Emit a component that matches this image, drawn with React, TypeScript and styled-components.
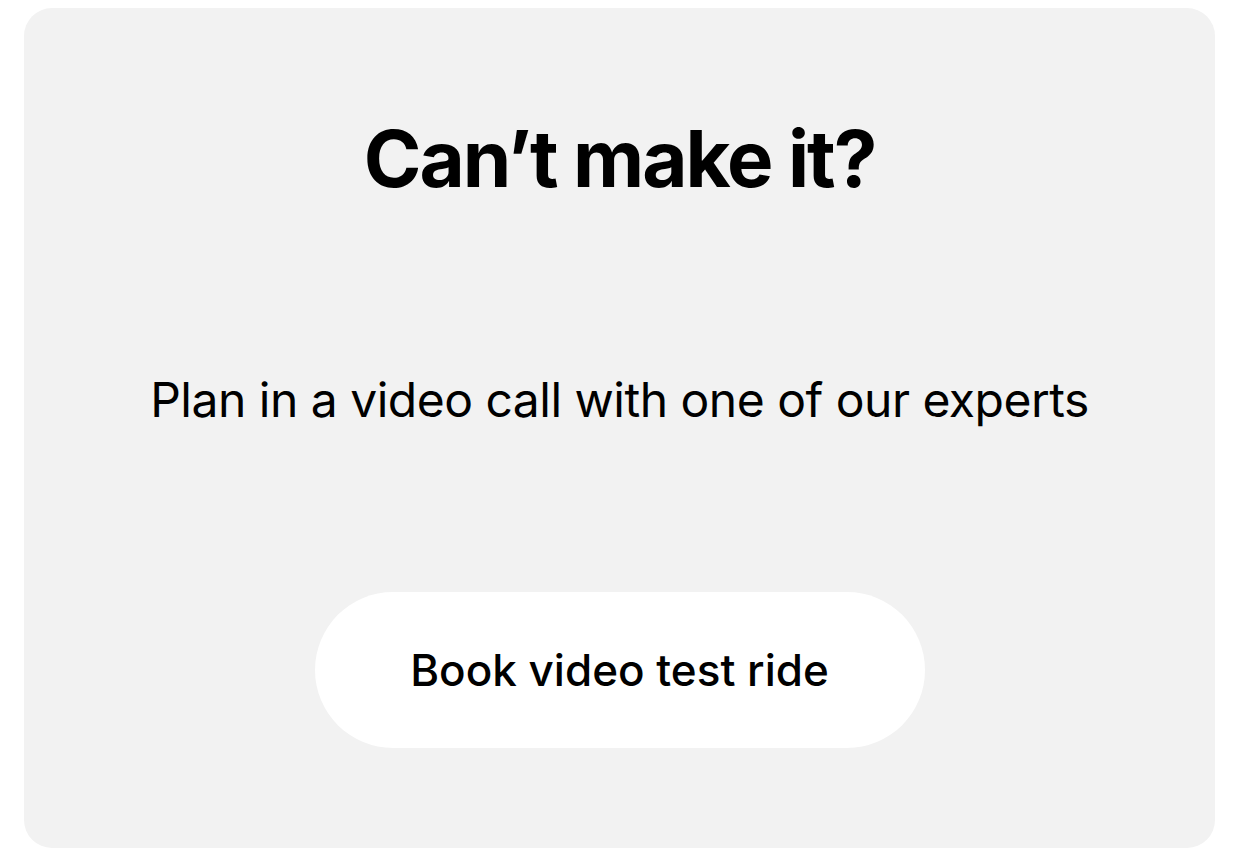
import React from "react";
import styled, { createGlobalStyle } from "styled-components";

const GlobalStyle = createGlobalStyle`
    html, body {
        margin: 0;
        padding: 0;
        background: #ffffff;
    }
    body {
        font-family: Inter, "Noto Sans", "Liberation Sans", sans-serif;
        color: #000000;
    }
`;

const Page = styled.div`
    width: 1239px;
    height: 856px;
    padding: 8px 24px;
    box-sizing: border-box;
`;

const Card = styled.section`
    height: 840px;
    box-sizing: border-box;
    background: #f2f2f2;
    border-radius: 28px;
    display: flex;
    flex-direction: column;
    align-items: center;
    padding-top: 104px;
`;

const Title = styled.h2`
    margin: 0;
    font-size: 78px;
    line-height: 94px;
    font-weight: 700;
    letter-spacing: -2px;
`;

const Subtitle = styled.p`
    margin: 165px 0 0;
    font-size: 48px;
    line-height: 58px;
    font-weight: 400;
    letter-spacing: -0.5px;
`;

const ActionButton = styled.button`
    margin-top: 163px;
    width: 610px;
    height: 156px;
    border: none;
    border-radius: 78px;
    background: #ffffff;
    font-family: inherit;
    font-size: 44px;
    font-weight: 500;
    color: #000000;
    letter-spacing: 0;
    cursor: pointer;
`;

const App: React.FC = () => {
    return (
        <>
            <GlobalStyle />
            <Page>
                <Card>
                    <Title>Can’t make it?</Title>
                    <Subtitle>Plan in a video call with one of our experts</Subtitle>
                    <ActionButton type="button">Book video test ride</ActionButton>
                </Card>
            </Page>
        </>
    );
};

export default App;
